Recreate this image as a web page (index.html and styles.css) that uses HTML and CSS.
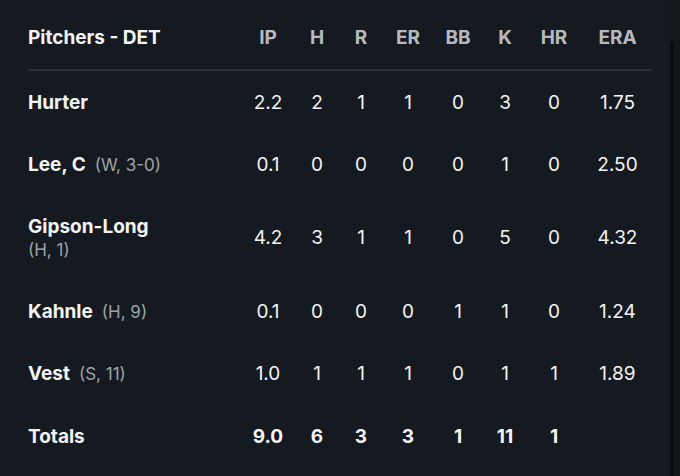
FILE: index.html
```html
<!DOCTYPE html>
<html lang="en">
<head>
    <meta charset="UTF-8">
    <meta name="viewport" content="width=device-width, initial-scale=1.0">
    <title>Pitchers - DET</title>
    <link rel="stylesheet" href="styles.css">
</head>
<body>
    <div class="page">
        <div class="box">
            <table class="stats">
                <colgroup>
                    <col class="c-name">
                    <col class="c-ip">
                    <col class="c-h">
                    <col class="c-r">
                    <col class="c-er">
                    <col class="c-bb">
                    <col class="c-k">
                    <col class="c-hr">
                    <col class="c-era">
                </colgroup>
                <thead>
                    <tr>
                        <th class="name">Pitchers - DET</th>
                        <th>IP</th>
                        <th>H</th>
                        <th>R</th>
                        <th>ER</th>
                        <th>BB</th>
                        <th>K</th>
                        <th>HR</th>
                        <th class="era">ERA</th>
                    </tr>
                </thead>
                <tbody>
                    <tr>
                        <td class="name"><span class="player">Hurter</span></td>
                        <td>2.2</td><td>2</td><td>1</td><td>1</td><td>0</td><td>3</td><td>0</td><td class="era">1.75</td>
                    </tr>
                    <tr>
                        <td class="name"><span class="player">Lee, C</span><span class="note">(W, 3-0)</span></td>
                        <td>0.1</td><td>0</td><td>0</td><td>0</td><td>0</td><td>1</td><td>0</td><td class="era">2.50</td>
                    </tr>
                    <tr class="tall">
                        <td class="name"><span class="player">Gipson-Long</span><br><span class="note under">(H, 1)</span></td>
                        <td>4.2</td><td>3</td><td>1</td><td>1</td><td>0</td><td>5</td><td>0</td><td class="era">4.32</td>
                    </tr>
                    <tr>
                        <td class="name"><span class="player">Kahnle</span><span class="note">(H, 9)</span></td>
                        <td>0.1</td><td>0</td><td>0</td><td>0</td><td>1</td><td>1</td><td>0</td><td class="era">1.24</td>
                    </tr>
                    <tr>
                        <td class="name"><span class="player">Vest</span><span class="note">(S, 11)</span></td>
                        <td>1.0</td><td>1</td><td>1</td><td>1</td><td>0</td><td>1</td><td>1</td><td class="era">1.89</td>
                    </tr>
                    <tr class="totals">
                        <td class="name"><span class="player">Totals</span></td>
                        <td>9.0</td><td>6</td><td>3</td><td>3</td><td>1</td><td>11</td><td>1</td><td class="era"></td>
                    </tr>
                </tbody>
            </table>
        </div>
        <div class="track"><div class="thumb"></div></div>
    </div>
</body>
</html>
```

FILE: styles.css
```css
body {
    margin: 0;
    padding: 0;
    background-color: #151a20;
    color: #f3f4f5;
    font-family: Inter, 'Open Sans', sans-serif;
}
.page {
    display: flex;
    height: 476px;
    overflow: hidden;
}
.box {
    width: 624px;
    padding: 0 18px 0 28px;
}
.track {
    flex: 1;
    display: flex;
    padding-top: 42px;
    background-color: #13181d;
}
.thumb {
    width: 4px;
    background-color: #0a0d10;
}
.stats {
    width: 624px;
    border-collapse: collapse;
    table-layout: fixed;
}
.c-name { width: 215px; }
.c-ip { width: 50px; }
.c-h { width: 48px; }
.c-r { width: 40px; }
.c-er { width: 54px; }
.c-bb { width: 46px; }
.c-k { width: 48px; }
.c-hr { width: 50px; }
.c-era { width: 73px; }
th {
    padding: 27px 0 20px;
    line-height: 22px;
    font-size: 19px;
    font-weight: 700;
    color: #b6babf;
    text-align: center;
    border-bottom: 2px solid #29313a;
}
th.name {
    text-align: left;
    color: #f3f4f5;
}
td {
    height: 62px;
    padding: 0;
    font-size: 19px;
    font-weight: 400;
    text-align: center;
    vertical-align: middle;
}
.era {
    padding-left: 4px;
}
td.name {
    text-align: left;
}
.tall td {
    height: 85px;
}
.totals td {
    height: 65px;
    font-weight: 700;
}
.player {
    font-weight: 700;
    line-height: 20px;
}
.note {
    margin-left: 9px;
    font-size: 17px;
    color: #9ea3a9;
}
.note.under {
    margin-left: 0;
    line-height: 18px;
}
```
